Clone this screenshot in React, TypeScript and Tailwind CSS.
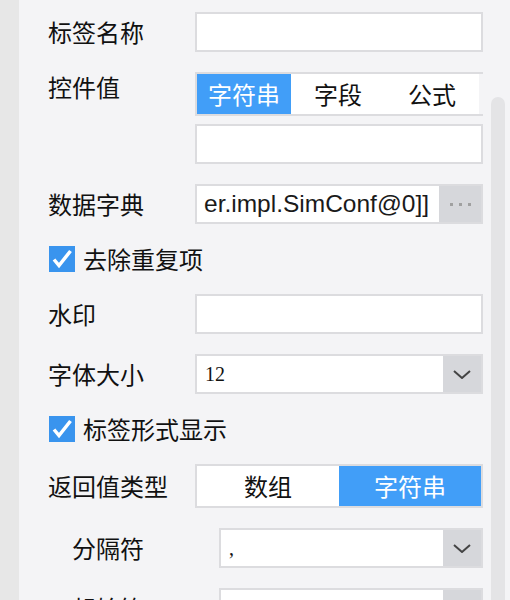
import { ReactNode } from "react";

function Label({ children }: { children: ReactNode }) {
  return <div className="w-[147px] shrink-0 leading-[30px]">{children}</div>;
}

function TextBox() {
  return <div className="h-[40px] w-full border-2 border-[#dcdcdf] bg-white" />;
}

function Chevron() {
  return (
    <svg width="18" height="9" viewBox="0 0 18 9" fill="none">
      <polyline points="1,1 9,8 17,1" stroke="#444" strokeWidth="2" />
    </svg>
  );
}

function SelectBox({ value }: { value: string }) {
  return (
    <div className="flex h-[40px] flex-1 border-2 border-[#dcdcdf] bg-white">
      <div className="flex-1 pl-[8px] font-['Liberation_Serif',serif] text-[20px] leading-[36px]">
        {value}
      </div>
      <div className="flex w-[38px] items-center justify-center bg-[#d6d7db]">
        <Chevron />
      </div>
    </div>
  );
}

function Check({ label }: { label: string }) {
  return (
    <div className="flex h-[30px] items-center pl-[1px]">
      <div className="flex h-[26px] w-[26px] items-center justify-center bg-[#3994ee]">
        <svg width="26" height="26" viewBox="0 0 26 26" fill="none">
          <polyline points="5,13.5 10,19.5 21.5,5" stroke="#fff" strokeWidth="3.5" />
        </svg>
      </div>
      <span className="ml-[8px] leading-[30px]">{label}</span>
    </div>
  );
}

export default function App() {
  return (
    <div className="flex h-[600px] w-[510px] overflow-hidden bg-[#f4f4f6] font-['Noto_Sans_CJK_SC',sans-serif] text-[24px] text-[#111]">
      <div className="w-[19px] shrink-0 bg-[#e7e7e7]" />

      <div className="flex flex-1 flex-col gap-[20px] pl-[29px] pr-[7px] pt-[12px]">
        <div className="flex items-center">
          <Label>标签名称</Label>
          <TextBox />
        </div>

        <div className="flex items-start">
          <Label>控件值</Label>
          <div className="flex flex-1 flex-col gap-[8px]">
            <div className="flex h-[44px] border-y-2 border-l-2 border-[#dcdcdf]">
              <div className="flex w-[94px] items-center justify-center bg-[#419ef8] text-white">字符串</div>
              <div className="flex w-[94px] items-center justify-center bg-white">字段</div>
              <div className="flex w-[94px] items-center justify-center bg-white">公式</div>
            </div>
            <TextBox />
          </div>
        </div>

        <div className="flex items-center">
          <Label>数据字典</Label>
          <div className="flex h-[40px] flex-1 border-2 border-[#dcdcdf] bg-white">
            <div className="flex-1 overflow-hidden whitespace-nowrap pl-[7px] font-['Liberation_Sans',sans-serif] text-[24.5px] leading-[36px] text-[#1a1a1a]">
              er.impl.SimConf@0]]
            </div>
            <div className="flex w-[42px] items-center justify-center gap-[6px] bg-[#d6d7db]">
              <div className="h-[3px] w-[3px] bg-[#a0a0a0]" />
              <div className="h-[3px] w-[3px] bg-[#a0a0a0]" />
              <div className="h-[3px] w-[3px] bg-[#a0a0a0]" />
            </div>
          </div>
        </div>

        <Check label="去除重复项" />

        <div className="flex items-center">
          <Label>水印</Label>
          <TextBox />
        </div>

        <div className="flex items-center">
          <Label>字体大小</Label>
          <SelectBox value="12" />
        </div>

        <Check label="标签形式显示" />

        <div className="flex items-center">
          <Label>返回值类型</Label>
          <div className="flex h-[44px] flex-1 border-2 border-[#dcdcdf]">
            <div className="flex flex-1 items-center justify-center bg-white">数组</div>
            <div className="flex flex-1 items-center justify-center bg-[#419ef8] text-white">字符串</div>
          </div>
        </div>

        <div className="flex items-center pl-[24px]">
          <Label>分隔符</Label>
          <SelectBox value="," />
        </div>

        <div className="flex items-center pl-[24px]">
          <Label>起始符</Label>
          <SelectBox value="" />
        </div>
      </div>

      <div className="w-[20px] shrink-0 pl-[1px] pr-[5px] pt-[97px]">
        <div className="h-full rounded-t-[7px] bg-[#e4e4e6]" />
      </div>
    </div>
  );
}
